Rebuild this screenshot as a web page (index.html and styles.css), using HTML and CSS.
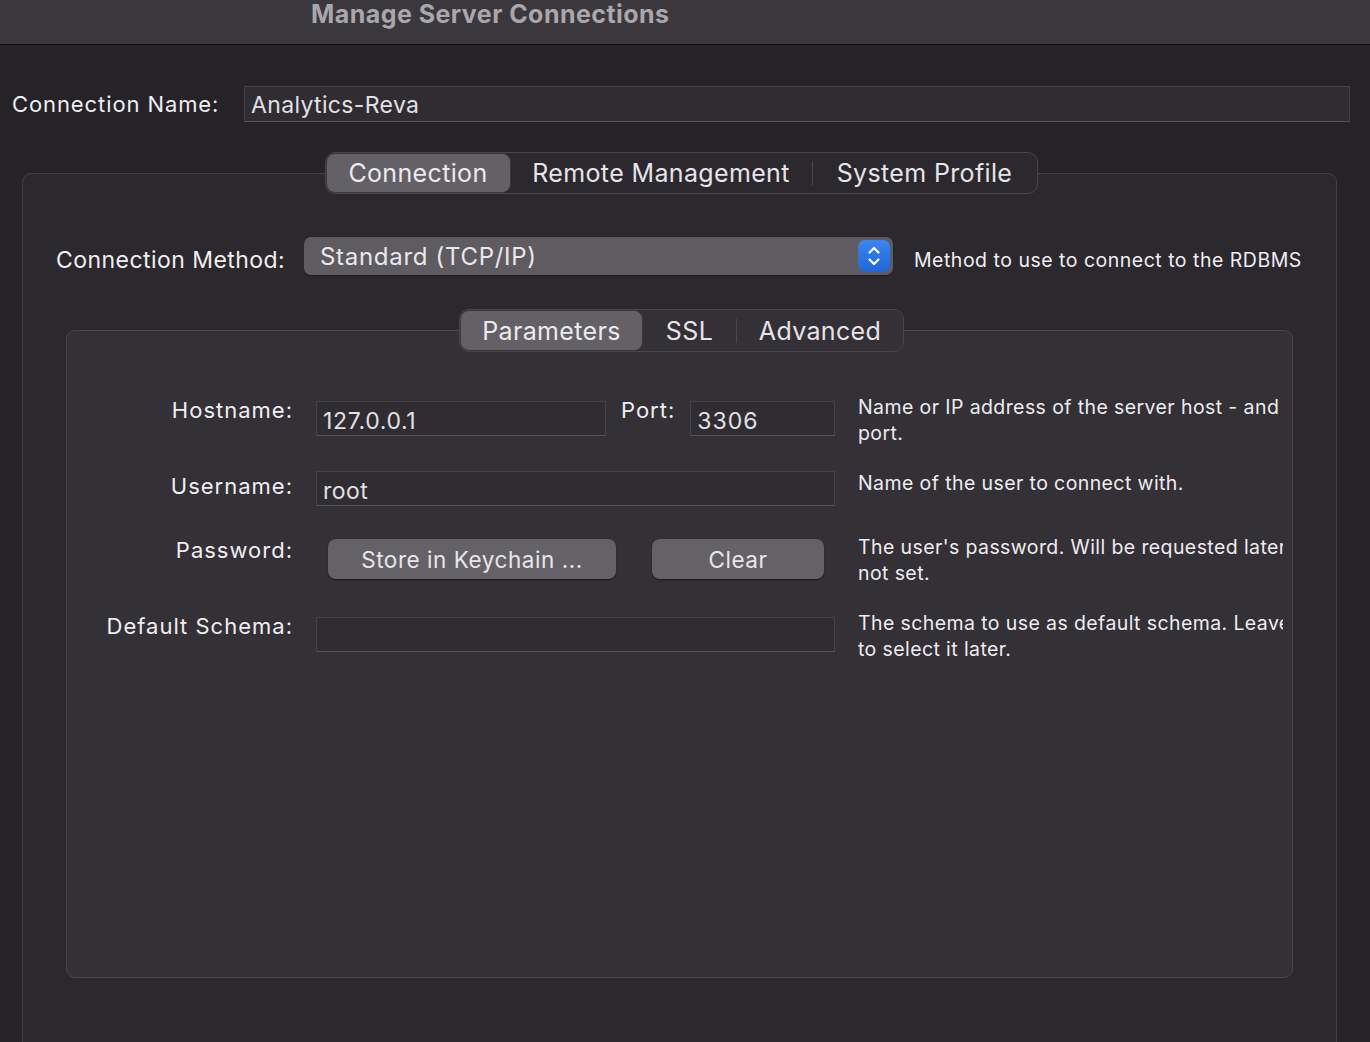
FILE: index.html
```html
<!DOCTYPE html>
<html lang="en">
<head>
<meta charset="utf-8">
<title>Manage Server Connections</title>
<link rel="stylesheet" href="styles.css">
</head>
<body>
<header class="titlebar">
  <h1 class="title">Manage Server Connections</h1>
</header>
<main class="content">
  <div class="name-row">
    <span class="name-label">Connection Name:</span>
    <div class="field name-field">Analytics-Reva</div>
  </div>

  <section class="group outer">
    <nav class="segmented seg-outer">
      <span class="seg active w-conn">Connection</span>
      <span class="seg w-remote">Remote Management</span>
      <span class="sep"></span>
      <span class="seg w-profile">System Profile</span>
    </nav>

    <div class="method-row">
      <span class="method-label">Connection Method:</span>
      <div class="select">
        <span class="select-text">Standard (TCP/IP)</span>
        <span class="stepper">
          <svg width="32" height="32" viewBox="0 0 32 32">
            <defs>
              <linearGradient id="stepg" x1="0" y1="0" x2="0" y2="1">
                <stop offset="0" stop-color="#3a86f2"/>
                <stop offset="1" stop-color="#1f66d6"/>
              </linearGradient>
            </defs>
            <rect x="0" y="0" width="32" height="32" rx="7" fill="url(#stepg)"/>
            <path d="M11.5 12.5 L16 8 L20.5 12.5" fill="none" stroke="#ffffff" stroke-width="2.2" stroke-linecap="round" stroke-linejoin="round"/>
            <path d="M11.5 19.5 L16 24 L20.5 19.5" fill="none" stroke="#ffffff" stroke-width="2.2" stroke-linecap="round" stroke-linejoin="round"/>
          </svg>
        </span>
      </div>
      <span class="method-desc">Method to use to connect to the RDBMS</span>
    </div>

    <section class="group inner">
      <nav class="segmented seg-inner">
        <span class="seg active w-params">Parameters</span>
        <span class="seg w-ssl">SSL</span>
        <span class="sep"></span>
        <span class="seg w-adv">Advanced</span>
      </nav>

      <div class="params">
        <span class="plabel">Hostname:</span>
        <div class="pfield host-cell">
          <div class="field host-field">127.0.0.1</div>
          <span class="port-label">Port:</span>
          <div class="field port-field">3306</div>
        </div>
        <p class="pdesc">Name or IP address of the server host - and<br>port.</p>

        <span class="plabel plabel-user">Username:</span>
        <div class="pfield">
          <div class="field wide-field">root</div>
        </div>
        <p class="pdesc pdesc-user">Name of the user to connect with.</p>

        <span class="plabel plabel-pass">Password:</span>
        <div class="pfield btn-cell">
          <button class="btn btn-store">Store in Keychain ...</button>
          <button class="btn btn-clear">Clear</button>
        </div>
        <p class="pdesc pdesc-pass">The user's password. Will be requested later if it's<br>not set.</p>

        <span class="plabel">Default Schema:</span>
        <div class="pfield">
          <div class="field wide-field"></div>
        </div>
        <p class="pdesc">The schema to use as default schema. Leave blank<br>to select it later.</p>
      </div>
    </section>
  </section>
</main>
</body>
</html>
```

FILE: styles.css
```css
* {
  box-sizing: border-box;
  margin: 0;
  padding: 0;
}

html, body {
  height: 100%;
}

body {
  background: #252228;
  color: #ebe9ed;
  font-family: Inter, "Noto Sans", "Liberation Sans", sans-serif;
  overflow: hidden;
}

/* title bar */
.titlebar {
  display: flex;
  align-items: flex-start;
  height: 45px;
  background: #3a383c;
  border-bottom: 1px solid #0c0b0d;
  padding-left: 311px;
}

.title {
  font-size: 25px;
  font-weight: 700;
  line-height: 28px;
  color: #a9a7ab;
  letter-spacing: 0.45px;
}

.content {
  padding-top: 41px;
}

/* connection name */
.name-row {
  display: flex;
  align-items: center;
  padding-left: 12px;
}

.name-label {
  width: 232px;
  font-size: 22px;
  letter-spacing: 0.9px;
  color: #f0eef2;
}

.field {
  background: #2f2c32;
  border: 1px solid #444246;
  border-bottom-color: #555358;
  color: #e2e0e4;
  font-size: 23px;
  letter-spacing: 0.5px;
  padding-left: 6px;
  overflow: hidden;
  white-space: nowrap;
}

.name-field {
  width: 1106px;
  height: 36px;
  line-height: 36px;
  letter-spacing: 0.35px;
}

/* group boxes */
.group {
  border: 1px solid #423f45;
  border-radius: 9px;
  display: flex;
  flex-direction: column;
}

.outer {
  margin: 51px 0 0 22px;
  width: 1315px;
  height: 900px;
  background: #2b282e;
}

.inner {
  margin: 55px 43px 0;
  height: 648px;
  background: #333036;
  border-color: #48454b;
}

/* segmented controls */
.segmented {
  display: flex;
  align-items: center;
  align-self: center;
  margin-top: -22px;
  border: 1px solid #48454b;
  border-radius: 10px;
  background: #2b282e;
}

.seg-outer {
  height: 42px;
  margin-left: 3px;
}

.seg-inner {
  height: 43px;
  background: #333036;
  margin-left: 4px;
}

.seg {
  height: 100%;
  display: flex;
  align-items: center;
  justify-content: center;
  font-size: 25px;
  letter-spacing: 0.35px;
  color: #e6e4e8;
}

.seg.active {
  background: #636166;
  border-radius: 9px;
  border: 1px solid #3a383d;
  color: #eceaee;
}

.sep {
  width: 1px;
  height: 24px;
  background: #4a474d;
}

.w-conn { width: 185px; }
.w-remote { width: 301px; }
.w-profile { width: 224px; }
.w-params { width: 183px; }
.w-ssl { width: 93px; }
.w-adv { width: 166px; }

/* connection method */
.method-row {
  display: flex;
  align-items: center;
  margin-top: 43px;
  padding-left: 33px;
}

.method-label {
  width: 248px;
  font-size: 23px;
  letter-spacing: 0.45px;
  margin-top: 8px;
  color: #f0eef2;
}

.select {
  width: 589px;
  height: 38px;
  background: #5e5c60;
  border-radius: 7px;
  display: flex;
  align-items: center;
  justify-content: space-between;
  padding: 0 3px 0 16px;
  box-shadow: 0 1px 1px rgba(0, 0, 0, 0.35);
}

.select-text {
  font-size: 24px;
  letter-spacing: 0.7px;
  color: #eae8ec;
}

.stepper {
  display: flex;
  width: 32px;
  height: 32px;
}

.method-desc {
  margin: 8px 0 0 21px;
  font-size: 19.5px;
  letter-spacing: 0.5px;
  color: #f0eef2;
}

/* parameters grid */
.params {
  display: grid;
  grid-template-columns: 226px 519px 425px;
  grid-template-rows: 70px 68px 78px 40px;
  column-gap: 23px;
  margin-top: 49px;
  align-items: start;
}

.plabel {
  font-size: 22px;
  line-height: 22px;
  letter-spacing: 1px;
  text-align: right;
  margin-top: -2px;
  color: #f0eef2;
}

.plabel-user {
  margin-top: 4px;
}

.plabel-pass {
  margin-top: 0;
}

.pfield {
  display: flex;
  align-items: flex-start;
}

.host-field {
  width: 290px;
  height: 35px;
  line-height: 38px;
  flex: none;
  letter-spacing: 0.65px;
}

.port-label {
  font-size: 22px;
  line-height: 22px;
  letter-spacing: 1px;
  margin: -2px 15px 0 15px;
  color: #f0eef2;
}

.port-field {
  flex: 1;
  height: 35px;
  line-height: 38px;
  letter-spacing: 1px;
}

.wide-field {
  width: 100%;
  height: 35px;
  line-height: 38px;
}

.pdesc {
  font-size: 19.5px;
  line-height: 26px;
  letter-spacing: 0.4px;
  margin-top: -7px;
  white-space: nowrap;
  overflow: hidden;
  color: #eeecf0;
}

.pdesc-user {
  margin-top: -1px;
}

.pdesc-pass {
  margin-top: -5px;
}

/* buttons */
.btn-cell {
  padding-left: 12px;
  gap: 36px;
}

.btn {
  height: 40px;
  border: none;
  border-radius: 8px;
  background: #646266;
  color: #e8e6ea;
  font-family: inherit;
  font-size: 22.5px;
  letter-spacing: 0.55px;
  box-shadow: 0 1px 1.5px rgba(0, 0, 0, 0.45);
}

.btn-store {
  width: 288px;
}

.btn-clear {
  width: 172px;
}
```
